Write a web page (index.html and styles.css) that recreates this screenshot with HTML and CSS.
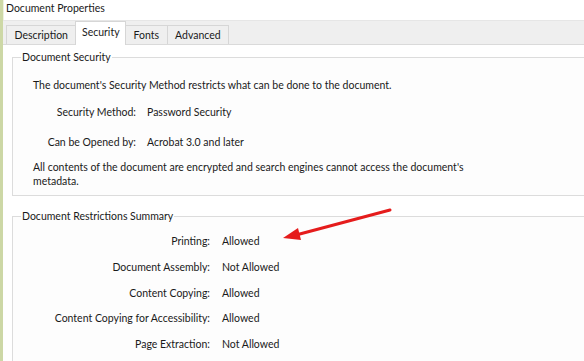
FILE: index.html
```html
<!DOCTYPE html>
<html lang="en">

<head>
  <meta charset="UTF-8">
  <title>Document Properties</title>
  <link rel="stylesheet" href="styles.css">
</head>

<body>
  <div class="window">
    <div class="title">Document Properties</div>

    <div class="tabs">
      <div class="tab">Description</div>
      <div class="tab active">Security</div>
      <div class="tab wide">Fonts</div>
      <div class="tab wide">Advanced</div>
    </div>

    <div class="panel">
      <fieldset class="group security">
        <legend>Document Security</legend>
        <p class="intro">The document's Security Method restricts what can be done to the document.</p>
        <div class="info">
          <span class="key">Security Method:</span><span>Password Security</span>
          <span class="key">Can be Opened by:</span><span>Acrobat 3.0 and later</span>
        </div>
        <p class="note">All contents of the document are encrypted and search engines cannot access the document's metadata.</p>
      </fieldset>

      <fieldset class="group restrictions">
        <legend>Document Restrictions Summary</legend>
        <div class="summary">
          <span class="key">Printing:</span><span>Allowed</span>
          <span class="key">Document Assembly:</span><span>Not Allowed</span>
          <span class="key">Content Copying:</span><span>Allowed</span>
          <span class="key">Content Copying for Accessibility:</span><span>Allowed</span>
          <span class="key">Page Extraction:</span><span>Not Allowed</span>
        </div>
      </fieldset>
    </div>

    <!-- annotation drawn over the dialog -->
    <svg class="arrow" width="584" height="361" viewBox="0 0 584 361">
      <line x1="390" y1="210" x2="296" y2="235" stroke="#e51c1c" stroke-width="3" stroke-linecap="round" />
      <polygon points="283,238 298,228 301,240" fill="#e51c1c" />
    </svg>
  </div>
</body>

</html>
```

FILE: styles.css
```css
body {
  margin: 0;
  font-family: 'Lato', sans-serif;
  font-size: 10.5px;
  color: #1a1a1a;
  background: #fff;
  overflow: hidden;
}

.window {
  position: relative;
  width: 584px;
  height: 361px;
  border-left: 3px solid #cdd8a6;
  box-sizing: border-box;
  overflow: hidden;
}

.title {
  height: 20px;
  line-height: 17px;
  padding-left: 2px;
  border-left: 1px solid #eef2e0;
}

.tabs {
  display: flex;
  align-items: flex-end;
  height: 23px;
  padding-left: 3px;
  background: #efefef;
  border-top: 1px solid #e6e6e6;
  border-bottom: 1px solid #dadada;
}

.tab {
  height: 19px;
  line-height: 18px;
  padding: 0 7.5px;
  border: 1px solid #d6d6d6;
  border-bottom: none;
  border-right: none;
  box-sizing: border-box;
  white-space: nowrap;
}

.tab.wide {
  padding: 0 7.5px;
}

.tab:last-child {
  border-right: 1px solid #d6d6d6;
}

.tab.active {
  height: 24px;
  line-height: 20px;
  padding: 0 5.5px;
  margin-bottom: -1px;
  background: #fff;
  border-right: 1px solid #d6d6d6;
}

.tab.active + .tab {
  border-left: none;
}

.panel {
  padding: 4px 0 0 9px;
}

.group {
  margin: 0 -20px 0 0;
  padding: 0 0 0 20px;
  border: 1px solid #dcdcdc;
  background: #fdfdfd;
}

.group legend {
  padding: 0 1px;
  margin-left: -12px;
  line-height: 16px;
}

.intro {
  margin: 12px 0 0;
  line-height: 16px;
}

.info {
  display: grid;
  grid-template-columns: 103px auto;
  column-gap: 11px;
  row-gap: 14px;
  margin-top: 11px;
  line-height: 16px;
  white-space: nowrap;
}

.key {
  text-align: right;
}

.note {
  margin: 10px 0 7px;
  line-height: 14px;
  width: 460px;
}

.restrictions {
  margin-top: 12px;
  height: 200px;
}

.summary {
  display: grid;
  grid-template-columns: 177px auto;
  column-gap: 12px;
  row-gap: 9.8px;
  margin-top: 9px;
  line-height: 16px;
  white-space: nowrap;
}

.arrow {
  position: absolute;
  left: -3px;
  top: 0;
}
```
